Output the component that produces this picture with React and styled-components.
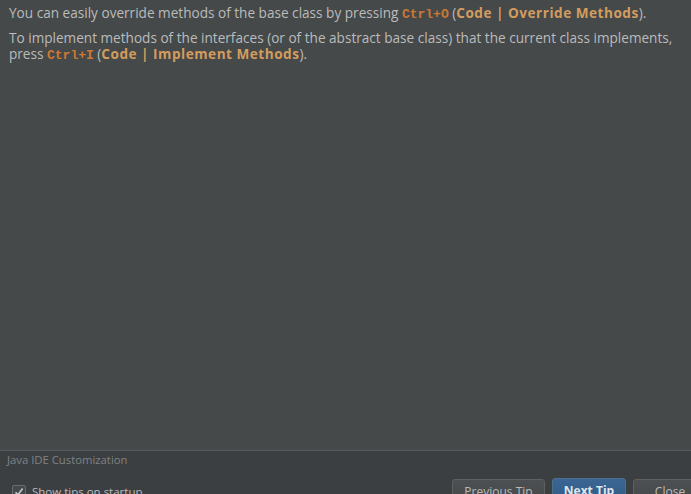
import React from 'react'
import styled, { createGlobalStyle } from 'styled-components'

const Global = createGlobalStyle`
  html, body {
    margin: 0;
    padding: 0;
    background: #3c3f41;
  }
  #root {
    height: 100vh;
  }
`

const Dialog = styled.div`
  display: flex;
  flex-direction: column;
  height: 494px;
  width: 691px;
  overflow: hidden;
  font-family: "Open Sans", "Noto Sans", sans-serif;
`

const TipPane = styled.div`
  flex: 1;
  background: #45494a;
  padding: 5px 9px 0 9px;
  color: #bbbbbb;
  font-size: 13.6px;
  border-bottom: 1px solid #55595b;
`

const Para = styled.p`
  margin: 0 0 7px 0;
  line-height: 16px;
`

const Shortcut = styled.span`
  font-family: "Liberation Mono", monospace;
  font-size: 13px;
  font-weight: bold;
  color: #cc7832;
`

const MenuPath = styled.span`
  font-weight: bold;
  letter-spacing: 0.5px;
  color: #d39c5e;
`

const Footer = styled.div`
  height: 43px;
  background: #3c3f41;
  display: flex;
  flex-direction: column;
`

const Category = styled.div`
  padding: 2px 0 0 7px;
  font-size: 11.3px;
  color: #7f8284;
  line-height: 14px;
`

const Controls = styled.div`
  display: flex;
  align-items: flex-start;
  padding: 12px 0 0 12px;
`

const CheckLabel = styled.label`
  display: flex;
  align-items: center;
  gap: 6px;
  font-size: 11.5px;
  color: #bbbbbb;
  margin-top: 5px;
`

const Box = styled.span`
  width: 12px;
  height: 12px;
  border: 1px solid #6b6b6b;
  background: #43494a;
  border-radius: 2px;
  display: flex;
  align-items: center;
  justify-content: center;
`

const Buttons = styled.div`
  margin-left: auto;
  display: flex;
  gap: 7px;
  margin-right: -16px;
`

const Button = styled.button`
  font-family: inherit;
  font-size: 12px;
  height: 24px;
  padding: 0;
  border-radius: 3px;
  border: 1px solid ${p => (p.$primary ? '#4c708c' : '#5e6060')};
  background: ${p => (p.$primary ? 'linear-gradient(#3b6694, #325b86)' : 'linear-gradient(#4c5052, #45494a)')};
  color: ${p => (p.$primary ? '#dfe6ee' : '#bbbbbb')};
  font-weight: ${p => (p.$primary ? 'bold' : 'normal')};
  width: ${p => p.$w}px;
  margin-top: ${p => (p.$primary ? '-1px' : '0')};
`

export default function App() {
  return (
    <Dialog>
      <Global />
      <TipPane>
        <Para>
          You can easily override methods of the base class by pressing <Shortcut>Ctrl+O</Shortcut>{' '}
          (<MenuPath>Code | Override Methods</MenuPath>).
        </Para>
        <Para>
          To implement methods of the interfaces (or of the abstract base class) that the current class implements,
          press <Shortcut>Ctrl+I</Shortcut> (<MenuPath>Code | Implement Methods</MenuPath>).
        </Para>
      </TipPane>
      <Footer>
        <Category>Java IDE Customization</Category>
        <Controls>
          <CheckLabel>
            <Box>
              <svg width="10" height="10" viewBox="0 0 10 10">
                <path d="M1.5 5.2 L4 7.8 L8.6 1.6" fill="none" stroke="#c8c8c8" strokeWidth="1.6" />
              </svg>
            </Box>
            Show tips on startup
          </CheckLabel>
          <Buttons>
            <Button $w={93}>Previous Tip</Button>
            <Button $primary $w={74}>Next Tip</Button>
            <Button $w={74}>Close</Button>
          </Buttons>
        </Controls>
      </Footer>
    </Dialog>
  )
}
